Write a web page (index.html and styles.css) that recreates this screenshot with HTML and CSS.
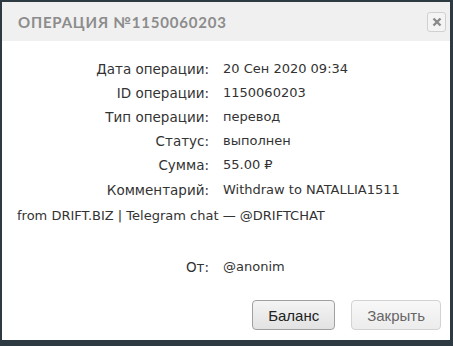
FILE: index.html
```html
<!DOCTYPE html>
<html lang="ru">
<head>
  <meta charset="UTF-8">
  <title>Операция №1150060203</title>
  <link rel="stylesheet" href="styles.css">
</head>
<body>

  <div class="dialog">
    <div class="dialog-title">
      <span>Операция №1150060203</span>
      <button class="close" title="Закрыть">
        <svg width="10" height="10" viewBox="0 0 10 10"><path d="M1.5 1.5 L8.5 8.5 M8.5 1.5 L1.5 8.5" stroke="#8a8a8a" stroke-width="2.4"/></svg>
      </button>
    </div>

    <div class="dialog-content">
      <div class="row"><span class="label">Дата операции:</span>20 Сен 2020 09:34</div>
      <div class="row"><span class="label">ID операции:</span>1150060203</div>
      <div class="row"><span class="label">Тип операции:</span>перевод</div>
      <div class="row"><span class="label">Статус:</span>выполнен</div>
      <div class="row"><span class="label">Сумма:</span>55.00 &#8381;</div>
      <div class="row comment"><span class="label">Комментарий:</span>Withdraw to NATALLIA1511 from DRIFT.BIZ | Telegram chat — @DRIFTCHAT</div>
      <div class="row"><span class="label">От:</span>@anonim</div>
    </div>

    <div class="dialog-buttons">
      <button class="btn">Баланс</button>
      <button class="btn btn-light">Закрыть</button>
    </div>
  </div>

</body>
</html>
```

FILE: styles.css
```css
html, body {
  margin: 0;
  padding: 0;
}
body {
  background: #2d3a42;
  font-family: "DejaVu Sans", sans-serif;
}
.dialog {
  margin: 2px 0 0 2px;
  width: 448px;
  height: 338px;
  background: #fff;
  display: flex;
  flex-direction: column;
}
.dialog-title {
  height: 39px;
  background: #f0f0f0;
  display: flex;
  align-items: center;
  justify-content: space-between;
  padding: 0 4px 0 16px;
}
.dialog-title span {
  font-family: Lato, sans-serif;
  font-weight: bold;
  font-size: 15px;
  letter-spacing: 0.8px;
  text-transform: uppercase;
  color: #8c8c8c;
}
.close {
  width: 19px;
  height: 20px;
  padding: 0;
  border: 1px solid #d0d0d0;
  border-radius: 3px;
  background: #f4f4f4;
  display: flex;
  align-items: center;
  justify-content: center;
  margin-top: 1px;
}
.dialog-content {
  padding: 16px 30px 0 15px;
  font-size: 13px;
  color: #333;
  flex: 1;
}
.row {
  line-height: 24px;
  height: 24px;
}
.row.comment {
  line-height: 26px;
  height: auto;
  margin-bottom: 26px;
}
.label {
  display: inline-block;
  vertical-align: top;
  width: 206px;
  padding-right: 14px;
  box-sizing: border-box;
  text-align: right;
  font-size: 13.5px;
}
.dialog-buttons {
  display: flex;
  justify-content: flex-end;
  gap: 16px;
  padding: 0 9px 10px 0;
}
.btn {
  height: 30px;
  padding: 0 15px;
  font-family: "Liberation Sans", Arial, sans-serif;
  font-size: 15px;
  color: #222;
  border: 1px solid #a0a0a0;
  border-radius: 4px;
  background: linear-gradient(#f4f4f4, #e2e2e2);
}
.btn-light {
  color: #666;
  border-color: #d2d2d2;
  background: linear-gradient(#f8f8f8, #ececec);
}
```
